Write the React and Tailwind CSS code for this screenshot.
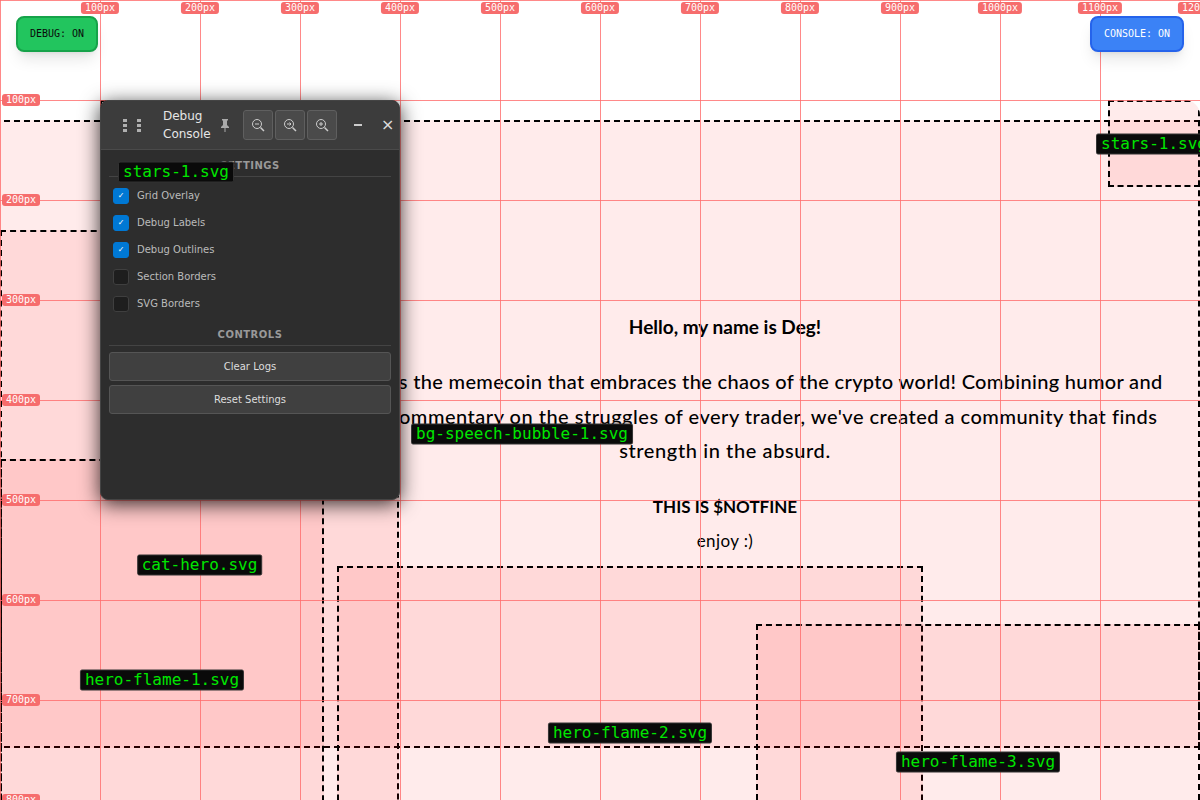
import React from 'react';

const gridMarks = [0, 100, 200, 300, 400, 500, 600, 700, 800, 900, 1000, 1100, 1200];

// debug outlines of the svg layers, label sits in the middle of each box
const boxes = [
  { name: 'bg-speech-bubble-1.svg', left: -156, top: 120, width: 1356, height: 628 },
  { name: 'stars-1.svg', left: 100, top: 100, width: 152, height: 144 },
  { name: 'stars-1.svg', left: 1108, top: 100, width: 92, height: 87, round: true },
  { name: 'cat-hero.svg', left: 0, top: 230, width: 399, height: 670 },
  { name: 'hero-flame-1.svg', left: 0, top: 459, width: 324, height: 441 },
  { name: 'hero-flame-2.svg', left: 337, top: 566, width: 586, height: 334 },
  { name: 'hero-flame-3.svg', left: 756, top: 624, width: 444, height: 276 },
];

const options = [
  { label: 'Grid Overlay', on: true },
  { label: 'Debug Labels', on: true },
  { label: 'Debug Outlines', on: true },
  { label: 'Section Borders', on: false },
  { label: 'SVG Borders', on: false },
];

function GridOverlay() {
  return (
    <div className="absolute inset-0 z-20 pointer-events-none">
      {gridMarks.map(m => (
        <div key={`v${m}`} className="absolute top-0 bottom-0 w-px bg-[#ff6b6b]/80" style={{ left: m }} />
      ))}
      {gridMarks.map(m => (
        <div key={`h${m}`} className="absolute left-0 right-0 h-px bg-[#ff6b6b]/80" style={{ top: m }} />
      ))}
    </div>
  );
}

function GridLabels() {
  return (
    <div className="absolute inset-0 z-50 pointer-events-none font-['DejaVu_Sans_Mono',monospace] text-[10px] leading-[12px] text-white">
      {gridMarks.slice(1).map(m => (
        <span key={`t${m}`} className="absolute top-[2px] -translate-x-1/2 rounded-[3px] bg-[#f66d6d] px-1" style={{ left: m }}>
          {m}px
        </span>
      ))}
      {gridMarks.slice(1).map(m => (
        <span key={`l${m}`} className="absolute left-[2px] -translate-y-1/2 rounded-[3px] bg-[#f66d6d] px-1" style={{ top: m }}>
          {m}px
        </span>
      ))}
    </div>
  );
}

function Box({ box }) {
  // the corner star is cut off by its wrapper, so the dashes stop at the curve
  return (
    <div
      className={`absolute overflow-hidden ${box.round ? 'rounded-tr-[15px]' : ''}`}
      style={{ left: box.left, top: box.top, width: box.width, height: box.height }}
    >
      <div className="h-full w-full border-2 border-dashed border-black bg-[#ff0000]/[0.08]" />
    </div>
  );
}

function BoxLabel({ box }) {
  return (
    <span
      className="absolute -translate-x-1/2 -translate-y-1/2 whitespace-nowrap rounded-[2px] border border-[#333] bg-[#0a0a0a] px-1 pb-[1px] font-['DejaVu_Sans_Mono',monospace] text-base leading-[18px] text-[#00e600]"
      style={{ left: box.left + box.width / 2, top: box.top + box.height / 2 }}
    >
      {box.name}
    </span>
  );
}

function IconButton({ children }) {
  return (
    <button className="flex h-[30px] w-[30px] items-center justify-center rounded-[3px] border border-[#5f5f5f] bg-[#4a4a4a] text-[#ccc]">
      {children}
    </button>
  );
}

function Lens({ mark }) {
  return (
    <svg width="14" height="14" viewBox="0 0 14 14" fill="none" stroke="currentColor" strokeWidth="1">
      <circle cx="6" cy="6" r="4.5" />
      <path d="M9.5 9.5L13 13" strokeWidth="1.5" />
      {mark}
    </svg>
  );
}

function SectionTitle({ children }) {
  return (
    <h3 className="mb-[5px] border-b border-[#444] pb-[4px] text-center text-[10px] leading-[12px] font-bold tracking-[0.5px] text-[#999]">
      {children}
    </h3>
  );
}

function DebugPanel() {
  return (
    <div className="absolute left-[100px] top-[100px] z-30 flex h-[400px] w-[300px] flex-col overflow-hidden rounded-lg border border-[#444] bg-[#2d2d2d] font-['DejaVu_Sans',sans-serif] shadow-[0_4px_20px_rgba(0,0,0,0.8)]">
      <div className="flex h-[49px] shrink-0 items-center border-b border-[#4a4a4a] bg-[#3c3c3c] pl-[22px]">
        <div className="grid grid-cols-2 gap-x-[10px] gap-y-[2px]">
          {[0, 1, 2, 3, 4, 5].map(i => (
            <span key={i} className="h-[3px] w-[4px] bg-[#b0b0b0]" />
          ))}
        </div>
        <div className="ml-[22px] w-[56px] text-xs leading-[18px] text-[#e6e6e6]">Debug Console</div>
        <span className="w-[14px] text-[#aaa]">
          <svg width="12" height="14" viewBox="0 0 12 14" fill="currentColor">
            <path d="M3 1h6v1L8 3v4l2 2v1H6.5v4h-1v-4H2V9l2-2V3L3 2z" />
          </svg>
        </span>
        <div className="ml-[10px] flex gap-[2px]">
          <IconButton><Lens mark={<path d="M4 6h4" />} /></IconButton>
          <IconButton><Lens mark={<path d="M4 6h4M6.5 4.5L8 6 6.5 7.5" />} /></IconButton>
          <IconButton><Lens mark={<path d="M4 6h4M6 4v4" />} /></IconButton>
        </div>
        <span className="ml-[17px] h-[2px] w-[8px] bg-[#ccc]" />
        <span className="ml-[19px] text-base leading-none text-[#ddd]">×</span>
      </div>
      <div className="px-2 pt-[10px]">
        <SectionTitle>SETTINGS</SectionTitle>
        <div>
          {options.map(o => (
            <label key={o.label} className="flex h-[27px] items-center pl-[4px] text-[10px] text-[#bbb]">
              <span
                className={`mr-2 flex h-4 w-4 items-center justify-center rounded-[3px] border text-[8px] leading-none text-white ${
                  o.on ? 'border-[#0078d4] bg-[#0078d4]' : 'border-[#3f3f3f] bg-[#1e1e1e]'
                }`}
              >
                {o.on ? '✓' : ''}
              </span>
              {o.label}
            </label>
          ))}
        </div>
        <div className="mt-[12px]">
          <SectionTitle>CONTROLS</SectionTitle>
          <div className="flex flex-col gap-[4px] pt-[1px]">
            <button className="h-[29px] rounded-[3px] border border-[#555] bg-[#404040] text-[10px] text-[#ddd]">Clear Logs</button>
            <button className="h-[29px] rounded-[3px] border border-[#555] bg-[#404040] text-[10px] text-[#ddd]">Reset Settings</button>
          </div>
        </div>
      </div>
    </div>
  );
}

export default function App() {
  return (
    <div className="relative h-[800px] w-[1200px] overflow-hidden bg-white">
      <div className="absolute inset-0">
        {boxes.map((b, i) => <Box key={i} box={b} />)}
      </div>

      <main className="relative z-10 ml-[250px] flex w-[950px] flex-col items-center pt-[315px] text-center font-['Lato',sans-serif] text-black">
        <h1 className="text-[19px] leading-[24px] font-bold">Hello, my name is Deg!</h1>
        <p className="mt-[25px] text-xl leading-[34.5px] font-medium whitespace-nowrap">
          <span className="tracking-[0.33px]">$NOTFINE is the memecoin that embraces the chaos of the crypto world! Combining humor and</span>
          <br />
          <span className="tracking-[0.5px]">irreverent commentary on the struggles of every trader, we've created a community that finds</span>
          <br />
          <span className="tracking-[0.6px]">strength in the absurd.</span>
        </p>
        <h2 className="mt-[27px] text-[17px] leading-[24px] font-bold">THIS IS $NOTFINE</h2>
        <p className="mt-[10px] text-[17px] leading-[24px] tracking-[0.4px]">enjoy :)</p>
      </main>

      <GridOverlay />
      <DebugPanel />

      <div className="absolute inset-0 z-40 pointer-events-none">
        {boxes.map((b, i) => <BoxLabel key={i} box={b} />)}
      </div>

      <GridLabels />

      <button className="absolute left-4 top-4 z-50 flex h-9 w-[82px] items-center justify-center rounded-lg border-2 border-[#16a34a] bg-[#22c55e] pb-[1px] font-['DejaVu_Sans_Mono',monospace] text-[10px] text-[#0a0a0a] shadow-lg">
        DEBUG: ON
      </button>
      <button className="absolute right-4 top-4 z-50 flex h-9 w-[94px] items-center justify-center rounded-lg border-2 border-[#2563eb] bg-[#3b82f6] pb-[1px] font-['DejaVu_Sans_Mono',monospace] text-[10px] text-white shadow-lg">
        CONSOLE: ON
      </button>
    </div>
  );
}
